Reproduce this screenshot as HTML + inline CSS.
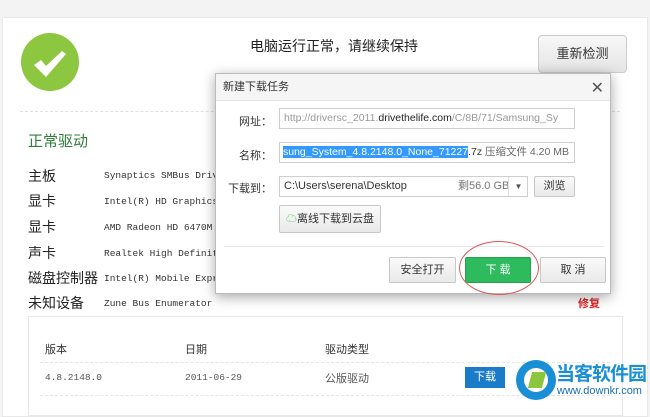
<!DOCTYPE html><html><head><meta charset="utf-8"><style>
*{margin:0;padding:0;box-sizing:border-box}
body{width:650px;height:402px;overflow:hidden;background:#f3f3f3;font-family:"Liberation Sans","Noto Sans CJK SC",sans-serif;position:relative;color:#333}
.a{position:absolute}
.panel{left:2px;top:17px;width:646px;height:400px;background:#fff;border:1px solid #e8e8e8}
.lab{font-size:14px;color:#222;left:28px}
.val{font-family:"Liberation Mono","Noto Sans CJK SC",monospace;font-size:9.5px;color:#333;left:104px}
.dlg{left:215px;top:73px;width:396px;height:221px;background:#fff;border:1px solid #bbb;box-shadow:0 3px 12px rgba(0,0,0,.35)}
.inp{position:absolute;left:63px;width:296px;height:21px;border:1px solid #cfcfcf;font-size:11px;line-height:19px;padding-left:4px;white-space:nowrap;overflow:hidden}
.fl{position:absolute;font-size:11px;color:#333;text-align:right;width:56px;left:0}
.btn{position:absolute;height:26px;border:1px solid #c8c8c8;background:linear-gradient(#fafafa,#e9e9e9);font-size:11px;text-align:center;line-height:24px;border-radius:2px}
</style></head><body>
<div class="a panel"></div>
<div class="a" style="left:21px;top:33px;width:58px;height:58px;border-radius:50%;background:#8dc63f"></div>
<svg class="a" style="left:33px;top:50px" width="34" height="28"><path d="M1 15 L8 10 L13 16 L29 1 L33 4 L13 27 Z" fill="#fff"/></svg>
<div class="a" style="left:250px;top:36px;font-size:14px;color:#222">电脑运行正常，请继续保持</div>
<div class="a" style="left:538px;top:35px;width:89px;height:38px;border:1px solid #ccc;border-radius:4px;background:linear-gradient(#f8f8f8,#e4e4e4);font-size:13px;text-align:center;line-height:36px;color:#333">重新检测</div>
<div class="a" style="left:20px;top:111px;width:600px;border-top:1px dashed #e0e0e0"></div>
<div class="a" style="left:28px;top:130px;font-size:15px;color:#2e7d3a">正常驱动</div>
<div class="a lab" style="top:166px">主板</div><div class="a val" style="top:170px">Synaptics SMBus Driver</div>
<div class="a lab" style="top:191px">显卡</div><div class="a val" style="top:196px">Intel(R) HD Graphics F</div>
<div class="a lab" style="top:217px">显卡</div><div class="a val" style="top:222px">AMD Radeon HD 6470M</div>
<div class="a lab" style="top:243px">声卡</div><div class="a val" style="top:248px">Realtek High Definitio</div>
<div class="a lab" style="top:268px">磁盘控制器</div><div class="a val" style="top:273px">Intel(R) Mobile Expres</div>
<div class="a lab" style="top:293px">未知设备</div><div class="a val" style="top:298px">Zune Bus Enumerator</div>
<div class="a" style="left:578px;top:295px;font-size:11px;color:#d22;font-weight:bold">修复</div>
<div class="a" style="left:28px;top:316px;width:595px;height:100px;border:1px solid #e8e8e8"></div>
<div class="a" style="left:45px;top:341px;font-size:11px">版本</div>
<div class="a" style="left:185px;top:341px;font-size:11px">日期</div>
<div class="a" style="left:325px;top:341px;font-size:11px">驱动类型</div>
<div class="a" style="left:40px;top:362px;width:570px;border-top:1px dashed #e5e5e5"></div>
<div class="a val" style="left:45px;top:372px;color:#555">4.8.2148.0</div>
<div class="a val" style="left:185px;top:372px;color:#555">2011-06-29</div>
<div class="a" style="left:325px;top:370px;font-size:11px;color:#555">公版驱动</div>
<div class="a" style="left:465px;top:367px;width:40px;height:21px;background:#1a7cc8;color:#fff;font-size:11px;text-align:center;line-height:21px">下载</div>
<div class="a" style="left:40px;top:395px;width:570px;border-top:1px dashed #e5e5e5"></div>
<div class="a" style="left:516px;top:360px;width:40px;height:40px;border-radius:50%;background:#1a8fd6"></div>
<div class="a" style="left:524px;top:368px;width:24px;height:24px;border-radius:50%;background:#fff"></div>
<div class="a" style="left:530px;top:372px;width:14px;height:16px;background:#8cc63f;transform:skew(-15deg)"></div>
<div class="a" style="left:556px;top:359px;font-size:19px;font-weight:bold;color:#1a8fd6;letter-spacing:-1px">当客软件园</div>
<div class="a" style="left:557px;top:385px;font-size:11px;color:#1a6fb0">www.downkr.com</div>
<div class="a dlg">
 <div style="height:27px;background:#f5f5f5;border-bottom:1px solid #e5e5e5;font-size:11px;line-height:27px;padding-left:7px;color:#333">新建下载任务</div>
 <div class="a" style="right:6px;top:4px;font-size:16px;color:#555">✕</div>
 <div class="fl" style="top:39px">网址：</div>
 <div class="inp" style="top:34px;color:#999;font-size:10.5px">http://driversc_2011.<span style="color:#222">drivethelife.com</span>/C/8B/71/Samsung_Sy</div>
 <div class="fl" style="top:73px">名称：</div>
 <div class="inp" style="top:68px;padding-left:3px;font-size:10.5px"><span style="background:#3399ff;color:#fff">sung_System_4.8.2148.0_None_71227</span>.7z <span style="color:#666">压缩文件 4.20 MB</span></div>
 <div class="fl" style="top:106px">下载到：</div>
 <div class="inp" style="top:102px;width:249px">C:\Users\serena\Desktop<span style="position:absolute;left:178px;color:#777">剩56.0 GB</span><span style="position:absolute;left:228px;top:0;width:20px;height:19px;border-left:1px solid #ddd;text-align:center;font-size:8px;color:#555">▼</span></div>
 <div class="btn" style="left:318px;top:102px;width:41px;height:21px;line-height:19px">浏览</div>
 <div class="btn" style="left:63px;top:131px;width:102px;height:28px;line-height:26px"><span style="color:#3c3;">☁</span>离线下载到云盘</div>
 <div class="a" style="left:8px;top:172px;width:380px;border-top:1px solid #e8e8e8"></div>
 <div class="btn" style="left:173px;top:183px;width:67px">安全打开</div>
 <div class="btn" style="left:249px;top:183px;width:66px;background:#2dbb5d;border-color:#25a04f;color:#fff">下 载</div>
 <div class="btn" style="left:324px;top:183px;width:66px">取 消</div>
</div>
<div class="a" style="left:459px;top:241px;width:80px;height:54px;border:1px solid #e05555;border-radius:50%"></div>
</body></html>
